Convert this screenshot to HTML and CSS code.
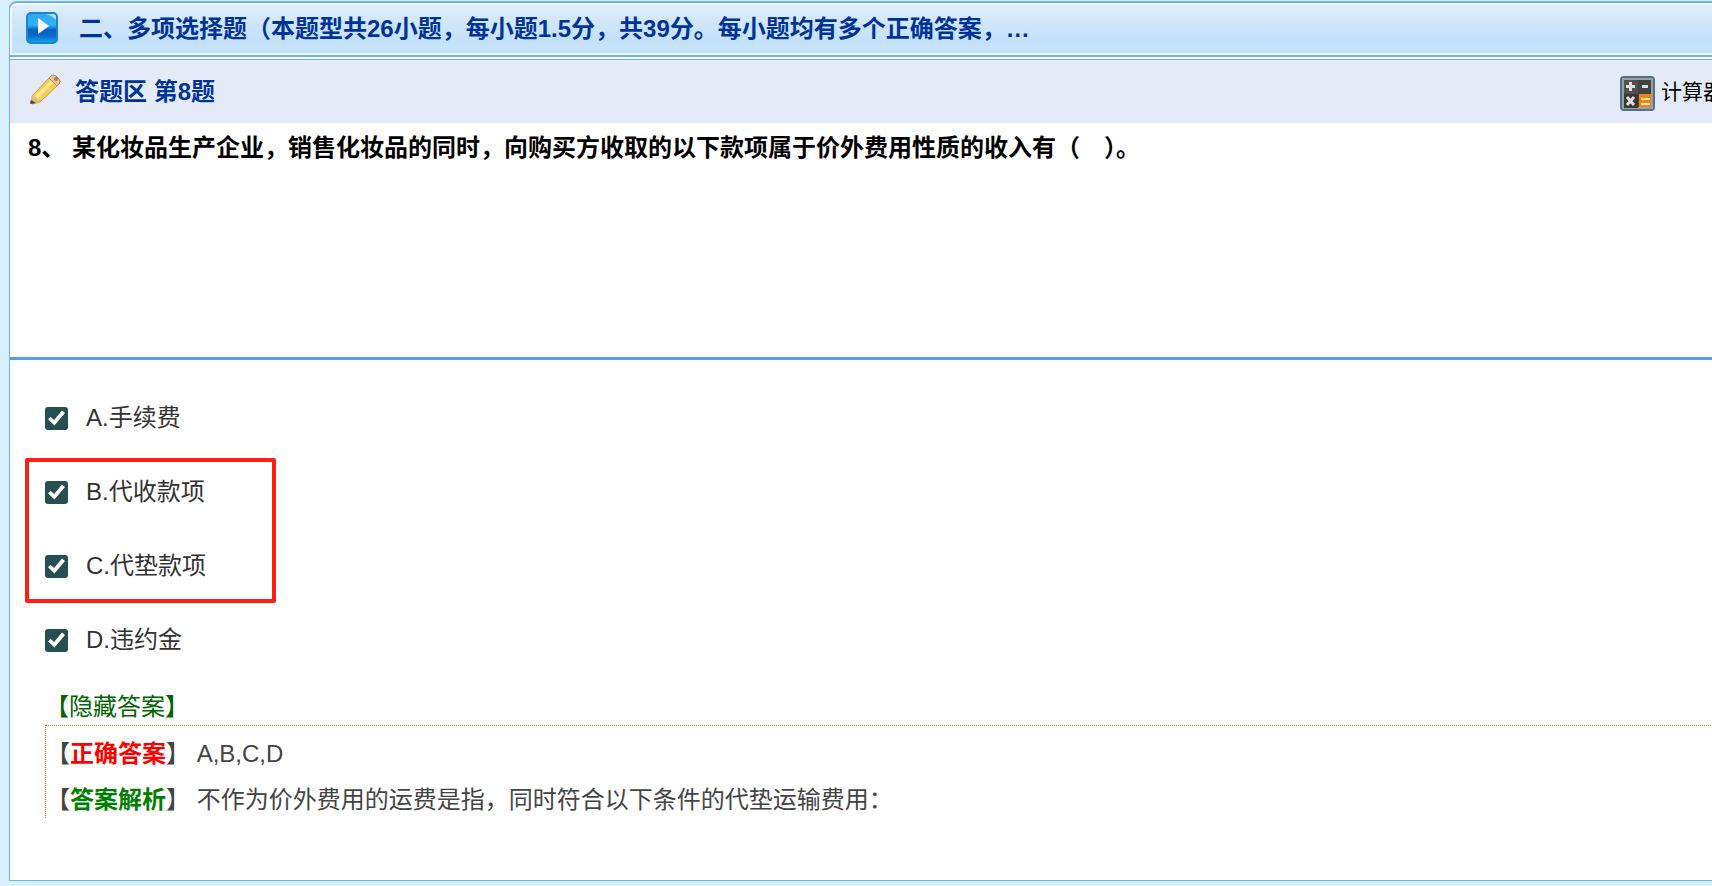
FILE: index.html
```html
<!DOCTYPE html>
<html lang="zh-CN">
<head>
    <meta charset="UTF-8">
    <title>答题区 第8题</title>
    <link rel="stylesheet" href="styles.css">
</head>
<body>
    <main class="panel">
        <header class="section-bar">
            <svg class="play-icon" width="32" height="32" viewBox="0 0 32 32" aria-hidden="true">
                <defs>
                    <linearGradient id="play-top" x1="0" y1="0" x2="0" y2="1">
                        <stop offset="0" stop-color="#2fa9ee"/>
                        <stop offset="0.4" stop-color="#2fb4f6"/>
                        <stop offset="0.56" stop-color="#0a5fc4"/>
                        <stop offset="0.75" stop-color="#0869cb"/>
                        <stop offset="1" stop-color="#12a8ea"/>
                    </linearGradient>
                </defs>
                <rect x="1" y="1" width="30" height="30" rx="4" fill="url(#play-top)" stroke="#1a84cc" stroke-width="2"/>
                <path d="M20 2h7q3 0 3 3v3q-3-4-10-6z" fill="#a5e2fb"/>
                <path d="M12 6l11 8-11 8z" fill="#fff"/>
            </svg>
            <h1>二、多项选择题（本题型共26小题，每小题1.5分，共39分。每小题均有多个正确答案，…</h1>
        </header>

        <div class="question-bar">
            <svg class="pencil-icon" width="32" height="32" viewBox="0 0 32 32" aria-hidden="true">
                <path d="M3 23L22 3q2-2 5 0l3 3q2 2 0 5L11 29l-8 2z" fill="#f3cf52" stroke="#c39a4a"/>
                <path d="M6 23L24 5l3 2L9 26z" fill="#fbe88f"/>
                <path d="M22 3q2-2 5 0l3 3q2 2 0 5l-2 2-8-8z" fill="#ecc791" stroke="#b98d5a"/>
                <circle cx="27" cy="6" r="2" fill="#a87868"/>
                <path d="M3 23l8 6-8 2-2-1z" fill="#dcb98a"/>
                <path d="M2 27l5 3-5 1-1-1z" fill="#4a4a4a"/>
            </svg>
            <h2>答题区 第8题</h2>
            <button class="calculator" type="button">
                <svg width="35" height="35" viewBox="0 0 35 35" aria-hidden="true">
                    <rect x="1" y="1" width="33" height="33" rx="3" fill="#4c4c4c" stroke="#50708c" stroke-width="2"/>
                    <rect x="3" y="3" width="29" height="29" fill="#434343" stroke="#9aa09a" stroke-width="2"/>
                    <rect x="4" y="4" width="14" height="14" fill="#505050"/>
                    <rect x="4" y="18" width="14" height="14" fill="#383838"/>
                    <rect x="19" y="18" width="12" height="13" fill="#f08609"/>
                    <path d="M10.500 6v9M6 10.500h9M22 10.500h6M7 21l7 8M14 21l-7 8" stroke="#dedede" stroke-width="3" fill="none"/>
                    <path d="M21 23h9M21 28h9" stroke="#ffe2b8" stroke-width="2"/>
                </svg>
                <span>计算器</span>
            </button>
        </div>

        <section class="question">
            <p>8、&nbsp;某化妆品生产企业，销售化妆品的同时，向购买方收取的以下款项属于价外费用性质的收入有（　）。</p>
        </section>

        <section class="answers">
            <label class="option"><input type="checkbox" checked>A.手续费</label>
            <div class="marked">
                <label class="option"><input type="checkbox" checked>B.代收款项</label>
                <label class="option"><input type="checkbox" checked>C.代垫款项</label>
            </div>
            <label class="option"><input type="checkbox" checked>D.违约金</label>

            <a class="toggle-answer" href="#analysis">【隐藏答案】</a>
            <div class="analysis" id="analysis">
                <p>【<strong class="correct">正确答案</strong>】 A,B,C,D</p>
                <p>【<strong class="explain">答案解析</strong>】 不作为价外费用的运费是指，同时符合以下条件的代垫运输费用：</p>
            </div>
        </section>
    </main>
</body>
</html>
```
FILE: styles.css
```css
* {
    box-sizing: border-box;
}

body {
    margin: 0;
    padding: 1px 0 5px 9px;
    min-height: 100vh;
    display: flex;
    background-color: #d9f0ff;
    font-family: "Liberation Sans", "Noto Sans CJK SC", sans-serif;
    font-size: 24px;
    line-height: 36px;
    overflow: hidden;
}

h1, h2, p {
    margin: 0;
    font-size: 24px;
}

/* the panel runs past the right edge of the window */
.panel {
    flex: 1;
    margin-right: -20px;
    border: 1px solid #6cb4ec;
    border-top: none;
    border-radius: 8px 0 0 0;
    background-color: #fff;
}

.section-bar {
    display: flex;
    align-items: center;
    gap: 21px;
    height: 56px;
    margin-left: -1px;
    padding: 0 16px;
    border: 2px solid #6cb4ec;
    border-left-width: 1px;
    border-radius: 8px 0 0 0;
    background: linear-gradient(#e4f2fb, #d3e7f7 30%, #c4e1fb 70%, #c8e4fd);
    box-shadow: inset 0 0 0 2px #f3faff;
    color: #003399;
}

.section-bar h1 {
    white-space: nowrap;
}

.play-icon {
    margin-bottom: 3px;
}

.question-bar {
    display: flex;
    align-items: center;
    gap: 14px;
    height: 64px;
    margin-top: 2px;
    padding: 0 7px 0 19px;
    border-top: 1px solid #6cb4ec;
    background-color: #e4ebf7;
    color: #003399;
}

.pencil-icon {
    margin-bottom: 6px;
}

.calculator {
    display: flex;
    align-items: center;
    gap: 6px;
    margin-left: auto;
    padding: 3px 0 0;
    border: none;
    background: none;
    color: #000;
    font-family: inherit;
    font-size: 21px;
    cursor: pointer;
}

.calculator span {
    padding-bottom: 6px;
}

.question {
    min-height: 237px;
    padding: 7px 18px;
    border-bottom: 3px solid #559ee3;
    color: #000;
    font-weight: bold;
}

.answers {
    padding: 21px 0 0 35px;
    color: #333;
}

.option {
    display: flex;
    align-items: center;
    gap: 18px;
    width: fit-content;
    height: 74px;
}

.option input {
    appearance: none;
    width: 23px;
    height: 23px;
    margin: 0;
    border-radius: 3px;
    background-color: #264f52;
    display: grid;
    place-items: center;
}

.option input:checked::before {
    content: "";
    width: 17px;
    height: 17px;
    background-color: #fff;
    clip-path: polygon(0 58%, 15% 42%, 36% 62%, 82% 6%, 100% 20%, 38% 94%);
}

/* red frame round the two disputed options */
.marked {
    position: relative;
    width: 231px;
}

.marked::before {
    content: "";
    position: absolute;
    top: 3px;
    right: 0;
    bottom: 0;
    left: -20px;
    border: 4px solid #ff1f14;
    border-radius: 2px;
    pointer-events: none;
}

.toggle-answer {
    display: block;
    width: fit-content;
    margin-top: 12px;
    color: #006600;
    text-decoration: none;
}

.analysis {
    display: flex;
    flex-direction: column;
    gap: 10px;
    padding-top: 10px;
    border-top: 1px dotted #f26a0a;
    border-left: 1px dotted #f26a0a;
    color: #444;
}

.analysis .correct {
    color: #ff0000;
}

.analysis .explain {
    color: #008000;
}
```
